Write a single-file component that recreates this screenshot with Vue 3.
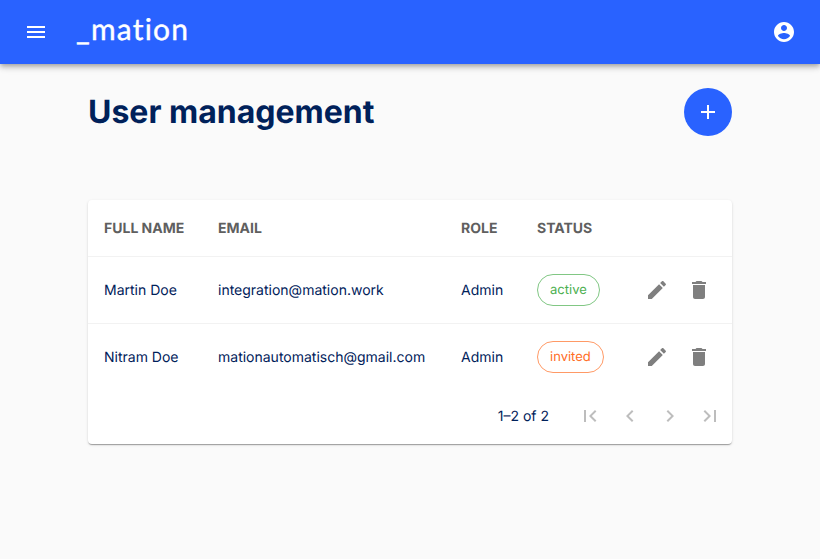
<script setup>
const users = [
  { name: 'Martin Doe', email: 'integration@mation.work', role: 'Admin', status: 'active' },
  { name: 'Nitram Doe', email: 'mationautomatisch@gmail.com', role: 'Admin', status: 'invited' }
];

const pagerIcons = [
  'M18.41 16.59L13.82 12l4.59-4.59L17 6l-6 6 6 6zM6 6h2v12H6z',
  'M15.41 7.41L14 6l-6 6 6 6 1.41-1.41L10.83 12z',
  'M10 6L8.59 7.41 13.17 12l-4.58 4.59L10 18l6-6z',
  'M5.59 7.41L10.18 12l-4.59 4.59L7 18l6-6-6-6zM16 6h2v12h-2z'
];
</script>

<template>
  <div class="page">
    <header class="topbar">
      <button class="icon-btn menu-btn">
        <svg viewBox="0 0 24 24"><path d="M3 18h18v-2H3v2zm0-5h18v-2H3v2zm0-7v2h18V6H3z" /></svg>
      </button>
      <span class="logo">_mation</span>
      <button class="icon-btn account-btn">
        <svg viewBox="0 0 24 24"><path d="M12 2C6.48 2 2 6.48 2 12s4.48 10 10 10 10-4.48 10-10S17.52 2 12 2zm0 3c1.66 0 3 1.34 3 3s-1.34 3-3 3-3-1.34-3-3 1.34-3 3-3zm0 14.2c-2.5 0-4.71-1.28-6-3.22.03-1.99 4-3.08 6-3.08 1.99 0 5.97 1.09 6 3.08-1.29 1.94-3.5 3.22-6 3.22z" /></svg>
      </button>
    </header>

    <main class="content">
      <div class="title-row">
        <h1>User management</h1>
        <button class="fab">
          <svg viewBox="0 0 24 24"><path d="M19 13h-6v6h-2v-6H5v-2h6V5h2v6h6v2z" /></svg>
        </button>
      </div>

      <section class="card">
        <table>
          <thead>
            <tr>
              <th class="col-name">Full name</th>
              <th class="col-email">Email</th>
              <th class="col-role">Role</th>
              <th class="col-status">Status</th>
              <th></th>
            </tr>
          </thead>
          <tbody>
            <tr v-for="user in users" :key="user.email">
              <td>{{ user.name }}</td>
              <td>{{ user.email }}</td>
              <td>{{ user.role }}</td>
              <td><span class="chip" :class="user.status">{{ user.status }}</span></td>
              <td>
                <div class="actions">
                  <button class="icon-btn row-btn">
                    <svg viewBox="0 0 24 24"><path d="M3 17.25V21h3.75L17.81 9.94l-3.75-3.75L3 17.25zM20.71 7.04c.39-.39.39-1.02 0-1.41l-2.34-2.34c-.39-.39-1.02-.39-1.41 0l-1.83 1.83 3.75 3.75 1.83-1.83z" /></svg>
                  </button>
                  <button class="icon-btn row-btn">
                    <svg viewBox="0 0 24 24"><path d="M6 19c0 1.1.9 2 2 2h8c1.1 0 2-.9 2-2V7H6v12zM19 4h-3.5l-1-1h-5l-1 1H5v2h14V4z" /></svg>
                  </button>
                </div>
              </td>
            </tr>
          </tbody>
        </table>
        <div class="pager">
          <span class="pager-label">1–2 of 2</span>
          <div class="pager-btns">
            <button v-for="d in pagerIcons" :key="d" class="icon-btn pager-btn" disabled>
              <svg viewBox="0 0 24 24"><path :d="d" /></svg>
            </button>
          </div>
        </div>
      </section>
    </main>
  </div>
</template>

<style>
html, body {
  margin: 0;
  background: #fafafa;
}
</style>

<style scoped>
.page {
  min-height: 559px;
  background: #fafafa;
  font-family: Inter, "Liberation Sans", sans-serif;
  color: #00215a;
  text-rendering: geometricPrecision;
}

.topbar {
  height: 64px;
  background: #2962ff;
  display: flex;
  align-items: center;
  padding: 0 24px;
  box-shadow: 0 2px 4px -1px rgba(0, 0, 0, 0.2), 0 4px 5px 0 rgba(0, 0, 0, 0.14), 0 1px 10px 0 rgba(0, 0, 0, 0.12);
  position: relative;
}

.icon-btn {
  border: 0;
  padding: 0;
  background: none;
  display: flex;
  align-items: center;
  justify-content: center;
}

.icon-btn svg {
  width: 24px;
  height: 24px;
  display: block;
  fill: currentColor;
}

.menu-btn,
.account-btn {
  color: #fff;
  width: 24px;
  height: 24px;
}

.logo {
  margin-left: 28px;
  margin-bottom: 6px;
  color: #fff;
  font-family: Lato, sans-serif;
  font-size: 30px;
  line-height: 1;
  letter-spacing: 1.2px;
  -webkit-text-stroke: 0.4px #fff;
}

.account-btn {
  margin-left: auto;
}

.content {
  padding: 24px 88px 0;
}

.title-row {
  display: flex;
  justify-content: space-between;
  align-items: flex-start;
  margin-bottom: 64px;
}

h1 {
  margin: 0;
  font-size: 32px;
  line-height: 48px;
  font-weight: 700;
  color: #00215a;
}

.fab {
  width: 48px;
  height: 48px;
  border: 0;
  padding: 0;
  border-radius: 50%;
  background: #2962ff;
  color: #fff;
  display: flex;
  align-items: center;
  justify-content: center;
}

.fab svg {
  width: 24px;
  height: 24px;
  fill: currentColor;
}

.card {
  background: #fff;
  border-radius: 4px;
  box-shadow: 0 2px 1px -1px rgba(0, 0, 0, 0.2), 0 1px 1px 0 rgba(0, 0, 0, 0.14), 0 1px 3px 0 rgba(0, 0, 0, 0.12);
}

table {
  width: 100%;
  table-layout: fixed;
  border-collapse: collapse;
}

th {
  height: 56px;
  padding: 0 0 0 16px;
  text-align: left;
  font-size: 14px;
  font-weight: 700;
  text-transform: uppercase;
  color: #5f5f5f;
  border-bottom: 1px solid #f2f2f2;
}

td {
  height: 66px;
  padding: 0 0 0 16px;
  font-size: 14px;
  color: #00215a;
  border-bottom: 1px solid #f2f2f2;
}

tbody tr:last-child td {
  border-bottom: 0;
}

.col-name { width: 98px; }
.col-email { width: 227px; }
.col-role { width: 60px; }
.col-status { width: 94px; }

.chip {
  display: inline-block;
  height: 30px;
  line-height: 30px;
  padding: 0 12px;
  border-radius: 16px;
  font-size: 13px;
  border: 1px solid;
}

.chip.active {
  color: #4caf50;
  border-color: #81c784;
}

.chip.invited {
  color: #ff6d1f;
  border-color: #ff9a66;
}

.actions {
  display: flex;
  gap: 18px;
  margin-left: -2px;
}

.row-btn {
  color: #7f7f7f;
}

.pager {
  height: 52px;
  padding: 0 2px 2px 0;
  display: flex;
  align-items: center;
  justify-content: flex-end;
}

.pager-label {
  font-size: 14px;
  color: #00215a;
  margin-right: 21px;
}

.pager-btns {
  display: flex;
}

.pager-btn {
  width: 40px;
  height: 40px;
  color: rgba(0, 0, 0, 0.26);
}
</style>
